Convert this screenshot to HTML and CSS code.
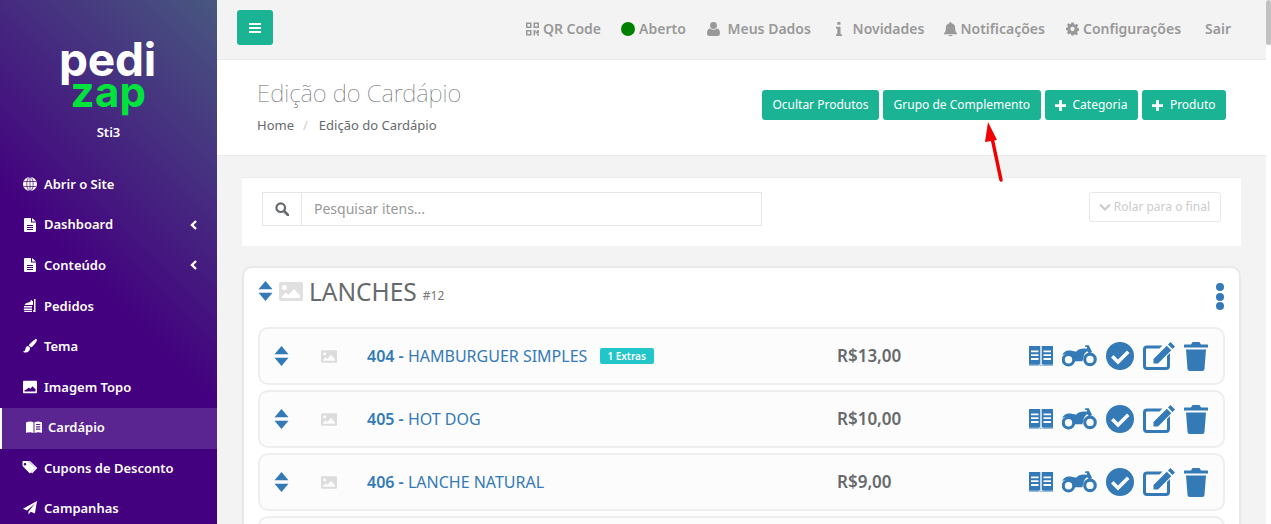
FILE: index.html
```html
<!DOCTYPE html>
<html lang="pt-BR">
<head>
<meta charset="utf-8">
<title>Edição do Cardápio</title>
<link rel="stylesheet" href="styles.css">
</head>
<body>
<svg class="sprite" width="0" height="0" aria-hidden="true">
  <symbol id="i-globe" viewBox="0 0 14 14"><circle cx="7" cy="7" r="7" fill="#fff"/><g fill="none" stroke="#43007f" stroke-width=".7"><ellipse cx="7" cy="7" rx="3.200" ry="7"/><path d="M7 0v14M.7 4.500h12.600M.7 9.500h12.600"/></g></symbol>
  <symbol id="i-file" viewBox="0 0 12 14"><path fill-rule="evenodd" d="M1 0h6v4.500h5V13a1 1 0 0 1-1 1H1a1 1 0 0 1-1-1V1a1 1 0 0 1 1-1zm7 0 4 3.500H8zM3 7v1h6V7zm0 2v1h6V9zm0 2v1h6v-1z"/></symbol>
  <symbol id="i-cloche" viewBox="0 0 14 14"><path d="M11 0h1.500v13H10.300v-2h.7zM5.500 3.500 7.500 2.500V1.500L9 1v1h1v4H1.500A4 4 0 0 1 5.500 3.500zM1 7h8v1.500H1zM.8 9.500H9V11H.8zM.8 11.800H9V13H2.300A1.500 1.500 0 0 1 .8 11.800z"/></symbol>
  <symbol id="i-brush" viewBox="0 0 14 14"><path d="M13.600.3c.5.500.4 1.200 0 1.900-1.500 2.600-3.800 5-5.600 6.300L5.700 6.200C7.200 4.300 9.500 2 12 .5c.6-.4 1.200-.6 1.600-.2zM5.200 7.100l1.900 1.900c0 2.600-2 4.600-4.500 4.600-1 0-2-.4-2.600-1.200 1.500 0 2-.7 2.300-2 .3-1.700 1.300-3.100 2.900-3.300z"/></symbol>
  <symbol id="i-picture" viewBox="0 0 14 12.500"><path fill-rule="evenodd" d="M1 0h12a1 1 0 0 1 1 1v10.500a1 1 0 0 1-1 1H1a1 1 0 0 1-1-1V1a1 1 0 0 1 1-1zM1.500 10.800h11V8.500L9.400 5.500 7.500 8 5.800 6.800 3.500 8.800 1.500 9.500z"/></symbol>
  <symbol id="i-book" viewBox="0 0 16 12"><path fill-rule="evenodd" d="M0 1.500C2.500.2 5.500.2 7.500 1.300V12C5.500 11 2.500 11 0 11.800zM8.500 1.300c2-1.100 5-1.100 7.500.2v10.300c-2.500-.8-5.500-.8-7.500.2zM10 3v1.100h4.300V3zm0 2.300v1.100h4.300V5.300zm0 2.300v1.100h4.300V7.600z"/></symbol>
  <symbol id="i-tags" viewBox="0 0 16 14"><path d="M1 0h5.200l7 7-5.300 5.500L1 5.400a1.500 1.500 0 0 1-.5-1V1A1 1 0 0 1 1 0zm2 2a1.300 1.300 0 1 0 0 2.600A1.300 1.300 0 0 0 3 2zM8 0l7.300 7.100-5.200 5.400-1-1 4.300-4.400L6.700 0z" fill-rule="evenodd"/></symbol>
  <symbol id="i-plane" viewBox="0 0 14 14"><path d="M14 0 11.900 12.500 7.800 10.800 5.500 13.500V10.500L12 2.500 4 9.500 0 7.800z"/></symbol>
  <symbol id="i-qr" viewBox="0 0 13 13"><path fill-rule="evenodd" d="M0 0h5.500v5.500H0zm1.500 1.500V4H4V1.500zM7.500 0H13v5.500H7.500zM9 1.500V4h2.500V1.500zM0 7.500h5.500V13H0zM1.500 9v2.500H4V9zM7.500 7.500h2v1.500H11V7.500h2v3.500H9.500V9.500h-.5V13H7.500zM11 11.500h2V13h-2z"/></symbol>
  <symbol id="i-user" viewBox="0 0 13 14"><path d="M6.500 0a3.400 3.400 0 1 1 0 6.900 3.400 3.400 0 0 1 0-6.900zM3.200 6.600c.9.800 2 1.200 3.300 1.200s2.400-.4 3.300-1.200C11.800 6.700 13 8.300 13 11.500c0 1.500-1 2.500-2.300 2.500H2.300C1 14 0 13 0 11.500c0-3.200 1.200-4.800 3.200-4.900z"/></symbol>
  <symbol id="i-info" viewBox="0 0 6 14"><path d="M1.300 0h3.200v2.800H1.300zM0 4.800h4.500v7.400H6V14H0v-1.800h1.300V6.600H0z"/></symbol>
  <symbol id="i-bell" viewBox="0 0 14 15"><path d="M7 0a1 1 0 0 1 1 1v.4c2.400.4 4 2.300 4 4.800 0 3.600 1 5 2 6.100v.9H0v-.9c1-1.100 2-2.500 2-6.100 0-2.500 1.600-4.400 4-4.800V1a1 1 0 0 1 1-1zM5 14h4a2 2 0 0 1-4 0z"/></symbol>
  <symbol id="i-gear" viewBox="0 0 14 14"><path fill-rule="evenodd" d="M5.700 0h2.600l.4 1.800 1.300.6L11.600 1.400l1.500 1.900-1.100 1.400.5 1.300 1.500.4v2.400l-1.600.5-.5 1.300 1 1.400-1.700 1.700-1.500-1-1.200.6L8.200 14H5.800l-.4-1.700-1.200-.5-1.500 1-1.700-1.700 1-1.500-.5-1.200L0 8.100V5.700l1.600-.4.5-1.300-1-1.500L2.800.9l1.500 1 1.100-.6zM7 4.700a2.300 2.300 0 1 0 0 4.600 2.300 2.300 0 0 0 0-4.600z"/></symbol>
  <symbol id="i-sort" viewBox="0 0 15 20"><path d="M7.500 0 14.500 8.300H.5zM.5 11.700h14L7.500 20z"/></symbol>
  <symbol id="i-openbook" viewBox="0 0 24 20"><path fill-rule="evenodd" d="M0 0h11.300v18.500H0zM12.700 0H24v18.500H12.700zM2 4.500v1.800h7.500V4.500zM2 8.300v1.800h7.500V8.300zM2 12.100v1.800h7.500v-1.800zM14.500 4.500v1.800H22V4.500zM14.500 8.300v1.800H22V8.300zM14.500 12.100v1.800H22v-1.800z"/><path d="M0 18.500h9.500L11 20h2l1.500-1.500H24V19.500H0z"/></symbol>
  <symbol id="i-moto" viewBox="0 0 36 22"><path fill-rule="evenodd" d="M6.700 7.800a7 7 0 1 1 0 14 7 7 0 0 1 0-14zm0 3.200a3.800 3.800 0 1 0 0 7.600 3.800 3.800 0 0 0 0-7.600zM28.800 7.500a7 7 0 1 1 0 14 7 7 0 0 1 0-14zm0 3.200a3.800 3.800 0 1 0 0 7.600 3.800 3.800 0 0 0 0-7.600z"/><path d="M0 10C1.500 7 4 5.300 7 5.300c3 0 5 .7 7.500 1.200C16.500 4.500 20 3 24.500 3.500L26 3 25.500 1.800 23.500 1.500 24 0h3.500l3.500 7-3 1.500-2-2.500c-1.800 1-3 2.500-3.500 4.500L21 16.500H12.500C12.700 12.500 11 9.500 8 9 5 8.500 2.500 9 0 10z"/></symbol>
  <symbol id="i-check" viewBox="0 0 28 28"><path fill-rule="evenodd" d="M14 0a14 14 0 1 1 0 28A14 14 0 0 1 14 0zM21 8.500 12 17.500 7.500 13 5 15.500l7 7 11.500-11.500z"/></symbol>
  <symbol id="i-edit" viewBox="0 0 32 28"><path d="M27.500 0 32 4.500 29.500 7 25 2.500zM23.800 3.700 28.300 8.200 15 21.500H10.500V17zM4 3.500h15.500L16.500 6.500H4a1 1 0 0 0-1 1V24a1 1 0 0 0 1 1h19a1 1 0 0 0 1-1V14l3-3V24a4 4 0 0 1-4 4H4a4 4 0 0 1-4-4V7.500a4 4 0 0 1 4-4z"/></symbol>
  <symbol id="i-trash" viewBox="0 0 24 29"><path d="M8.500 0h7l1.500 2.500h6.500a.5.500 0 0 1 .5.500v2.500H0V3a.5.500 0 0 1 .5-.5H7zM2 7.500h20L20.500 26.500a2.500 2.500 0 0 1-2.500 2.500H6a2.500 2.500 0 0 1-2.500-2.500z"/></symbol>
  <symbol id="i-image" viewBox="0 0 24 19"><path fill-rule="evenodd" d="M2 0h20a2 2 0 0 1 2 2v15a2 2 0 0 1-2 2H2a2 2 0 0 1-2-2V2a2 2 0 0 1 2-2zM5.500 3A2.500 2.500 0 1 0 5.500 8 2.500 2.500 0 0 0 5.500 3zM21 13.500 15 7 9.500 13 7 10.500 3 14.500V16h18z"/></symbol>
</svg>

<aside class="sidebar">
  <div class="brand">
    <div class="logo"><span class="logo-pedi">pedi</span><span class="logo-zap">zap</span></div>
    <div class="store">Sti3</div>
  </div>
  <nav class="menu">
    <a class="menu-item"><svg class="mi"><use href="#i-globe"/></svg><span>Abrir o Site</span></a>
    <a class="menu-item"><svg class="mi mi-file"><use href="#i-file"/></svg><span>Dashboard</span><svg class="caret" viewBox="0 0 8 10"><path d="M6 1 2 5l4 4"/></svg></a>
    <a class="menu-item"><svg class="mi mi-file"><use href="#i-file"/></svg><span>Conteúdo</span><svg class="caret" viewBox="0 0 8 10"><path d="M6 1 2 5l4 4"/></svg></a>
    <a class="menu-item"><svg class="mi"><use href="#i-cloche"/></svg><span>Pedidos</span></a>
    <a class="menu-item"><svg class="mi"><use href="#i-brush"/></svg><span>Tema</span></a>
    <a class="menu-item"><svg class="mi"><use href="#i-picture"/></svg><span>Imagem Topo</span></a>
    <a class="menu-item active"><svg class="mi"><use href="#i-book"/></svg><span>Cardápio</span></a>
    <a class="menu-item"><svg class="mi mi-wide"><use href="#i-tags"/></svg><span>Cupons de Desconto</span></a>
    <a class="menu-item"><svg class="mi"><use href="#i-plane"/></svg><span>Campanhas</span></a>
  </nav>
</aside>

<main class="main">
  <header class="topbar">
    <button class="burger" aria-label="Menu"><i></i><i></i><i></i></button>
    <div class="topnav">
      <a class="tn"><svg class="ti"><use href="#i-qr"/></svg>QR Code</a>
      <a class="tn"><span class="dot"></span>Aberto</a>
      <a class="tn tn-user"><svg class="ti"><use href="#i-user"/></svg>&nbsp;Meus Dados</a>
      <a class="tn tn-news"><svg class="ti ti-info"><use href="#i-info"/></svg>&nbsp;Novidades</a>
      <a class="tn tn-bell"><svg class="ti"><use href="#i-bell"/></svg>Notificações</a>
      <a class="tn"><svg class="ti"><use href="#i-gear"/></svg>Configurações</a>
      <a class="tn tn-exit">Sair</a>
    </div>
  </header>

  <section class="heading">
    <div>
      <h1 class="title">Edição do Cardápio</h1>
      <div class="crumbs"><span>Home</span><span class="sep">/</span><span>Edição do Cardápio</span></div>
    </div>
    <div class="actions">
      <a class="btn">Ocultar Produtos</a>
      <a class="btn">Grupo de Complemento</a>
      <a class="btn"><svg class="plus" viewBox="0 0 12 12"><path d="M4.500 0h3v4.500H12v3H7.500V12h-3V7.500H0v-3h4.500z"/></svg>Categoria</a>
      <a class="btn"><svg class="plus" viewBox="0 0 12 12"><path d="M4.500 0h3v4.500H12v3H7.500V12h-3V7.500H0v-3h4.500z"/></svg>Produto</a>
    </div>
    <svg class="arrow" viewBox="0 0 24 70"><path d="M17 60 7 13" stroke="#f00000" stroke-width="3.500" stroke-linecap="round" fill="none"/><path d="M4 2 13 20 1 22z" fill="#f00000"/></svg>
  </section>

  <div class="content">
    <section class="search-card">
      <div class="search">
        <span class="search-addon"><svg viewBox="0 0 14 14"><circle cx="5.700" cy="5.700" r="4.300" fill="none" stroke-width="2.200"/><path d="m9 9 4 4" fill="none" stroke-width="2.600" stroke-linecap="round"/></svg></span>
        <span class="search-input">Pesquisar itens...</span>
      </div>
      <a class="scroll-btn"><svg viewBox="0 0 12 8"><path d="m1 1.500 5 5 5-5"/></svg>Rolar para o final</a>
    </section>

    <section class="category">
      <div class="cat-head">
        <svg class="sort"><use href="#i-sort"/></svg>
        <svg class="cat-img"><use href="#i-image"/></svg>
        <h2 class="cat-name">LANCHES</h2>
        <small class="cat-id">#12</small>
        <span class="kebab"><i></i><i></i><i></i></span>
      </div>

      <article class="row">
        <svg class="sort"><use href="#i-sort"/></svg>
        <svg class="row-img"><use href="#i-image"/></svg>
        <div class="row-name"><b>404 -</b> HAMBURGUER SIMPLES<span class="badge">1 Extras</span></div>
        <div class="price">R$13,00</div>
        <div class="row-tools">
          <svg class="t-book"><use href="#i-openbook"/></svg><svg class="t-moto"><use href="#i-moto"/></svg><svg class="t-check"><use href="#i-check"/></svg><svg class="t-edit"><use href="#i-edit"/></svg><svg class="t-trash"><use href="#i-trash"/></svg>
        </div>
      </article>
      <article class="row">
        <svg class="sort"><use href="#i-sort"/></svg>
        <svg class="row-img"><use href="#i-image"/></svg>
        <div class="row-name"><b>405 -</b> HOT DOG</div>
        <div class="price">R$10,00</div>
        <div class="row-tools">
          <svg class="t-book"><use href="#i-openbook"/></svg><svg class="t-moto"><use href="#i-moto"/></svg><svg class="t-check"><use href="#i-check"/></svg><svg class="t-edit"><use href="#i-edit"/></svg><svg class="t-trash"><use href="#i-trash"/></svg>
        </div>
      </article>
      <article class="row">
        <svg class="sort"><use href="#i-sort"/></svg>
        <svg class="row-img"><use href="#i-image"/></svg>
        <div class="row-name"><b>406 -</b> LANCHE NATURAL</div>
        <div class="price">R$9,00</div>
        <div class="row-tools">
          <svg class="t-book"><use href="#i-openbook"/></svg><svg class="t-moto"><use href="#i-moto"/></svg><svg class="t-check"><use href="#i-check"/></svg><svg class="t-edit"><use href="#i-edit"/></svg><svg class="t-trash"><use href="#i-trash"/></svg>
        </div>
      </article>
      <article class="row"></article>
    </section>
  </div>
</main>

<div class="scrolltrack"><div class="scrollthumb"></div></div>
</body>
</html>
```

FILE: styles.css
```css
* { box-sizing: border-box; }
html, body { height: 100%; margin: 0; }
body {
  display: flex;
  overflow: hidden;
  background: #fff;
  color: #676a6c;
  font: 13px/1.4 "Noto Sans", "Open Sans", sans-serif;
}
.sprite { position: absolute; }
a { color: inherit; text-decoration: none; }

/* sidebar */
.sidebar {
  flex: 0 0 217px;
  height: 100%;
  overflow: hidden;
  color: #fff;
  background: linear-gradient(225deg, #485880 0, #43007f 290px);
}
.brand { height: 164.720px; padding-top: 39px; text-align: center; }
.logo { display: flex; flex-direction: column; align-items: center; height: 72px; font-family: Inter, sans-serif; font-weight: 700; }
.logo-pedi { font-size: 46px; line-height: 40px; letter-spacing: -.2px; margin-left: -2px; }
.logo-zap { font-size: 42px; line-height: 34px; letter-spacing: .3px; color: #00e33c; margin-top: -4px; }
.store { margin-top: 12px; font-weight: 600; line-height: 18px; }
.menu { display: flex; flex-direction: column; }
.menu-item {
  display: flex;
  align-items: center;
  flex: 0 0 40.560px;
  padding: 0 19px 2px 23px;
  font-weight: 600;
  font-size: 13px;
}
.menu-item span { flex: 1; }
.mi { width: 14px; height: 14px; margin-right: 7px; fill: #fff; flex: none; }
.mi-file { width: 12px; margin-left: 1px; margin-right: 8px; }
.mi-wide { width: 16px; margin-left: -1px; margin-right: 6px; }
.caret { width: 8px; height: 10px; fill: none; stroke: #fff; stroke-width: 2.400; flex: none; }
.active { background: #5a2590; border-left: 2px solid #fff; padding-left: 24px; }
.active .mi { width: 16px; margin-right: 6px; }

/* main */
.main { flex: 1; min-width: 0; display: flex; flex-direction: column; background: #f3f3f3; overflow: hidden; }
.topbar {
  flex: 0 0 60px;
  display: flex;
  align-items: center;
  justify-content: space-between;
  padding: 0 35px 2px 20px;
  background: #f3f3f3;
  border-bottom: 1px solid #e7eaec;
}
.burger { width: 36px; height: 35px; margin-bottom: 2px; padding: 0; display: flex; flex-direction: column; align-items: center; justify-content: center; gap: 2px; background: #1ab394; border: 0; border-radius: 3px; }
.burger i { width: 12px; height: 2px; background: #fff; }
.topnav { display: flex; gap: 20px; font-size: 14px; font-weight: 600; color: #999; }
.tn { display: flex; align-items: center; gap: 4px; }
.tn-user { margin-left: 1px; }
.tn-news { margin-left: 2px; }
.tn-bell { gap: 3px; margin-right: 1px; }
.tn-exit { margin-left: 4px; }
.ti { width: 13px; height: 14px; fill: #999; }
.ti-info { width: 6px; margin: 0 3px; }
.dot { width: 14px; height: 14px; border-radius: 50%; background: #008000; }

.heading {
  position: relative;
  flex: 0 0 96px;
  display: flex;
  justify-content: space-between;
  padding: 16px 40px 0 40px;
  background: #fff;
  border-bottom: 1px solid #e7eaec;
}
.title { margin: 0; font: 100 24px/33px "Noto Sans", sans-serif; color: #676a6c; }
.crumbs { margin-top: 7px; font-size: 13px; line-height: 18px; color: #676a6c; }
.sep { margin: 0 11px 0 9px; color: #ccc; }
.actions { display: flex; gap: 4px; margin-top: 14px; }
.btn { display: flex; align-items: center; height: 30px; padding: 0 10.500px; font-size: 12px; color: #fff; background: #1ab394; border-radius: 3px; }
.plus { width: 11px; height: 11px; margin-right: 6.500px; fill: #fff; }
.arrow { position: absolute; left: 767px; top: 60px; width: 24px; height: 70px; }

.content { flex: 1; padding: 21px 25px 0; }
.search-card {
  display: flex;
  justify-content: space-between;
  align-items: flex-start;
  height: 69px;
  padding: 14px 20px;
  margin-bottom: 20px;
  background: #fff;
  border-top: 1px solid #e7eaec;
}
.search { display: flex; width: 500px; height: 34px; border: 1px solid #e5e6e7; }
.search-addon { display: flex; align-items: center; justify-content: center; width: 39px; border-right: 1px solid #e5e6e7; }
.search-addon svg { width: 14px; height: 14px; stroke: #676a6c; }
.search-input { padding: 0 12px; font-size: 14px; line-height: 32px; color: #999; }
.scroll-btn { display: flex; align-items: center; height: 30px; padding: 0 10px 0 8.500px; font-size: 12px; color: #ccc; border: 1px solid #e7e7e7; border-radius: 3px; }
.scroll-btn svg { width: 12px; height: 8px; margin-right: 3px; fill: none; stroke: #ccc; stroke-width: 2.200; }

.category { padding: 0 14px; background: #fff; border: 2px solid #e8e8e8; border-radius: 10px; }
.cat-head { display: flex; align-items: center; height: 59px; padding-bottom: 13px; }
.sort { width: 15px; height: 20px; fill: #337ab7; flex: none; }
.cat-img { width: 24px; height: 19px; margin-left: 6px; fill: #e0e0e0; flex: none; }
.cat-name { margin: 0 0 0 6px; font-size: 24.500px; font-weight: 400; line-height: 33px; color: #676a6c; }
.cat-id { margin: 10px 0 0 6px; font-size: 12px; color: #777; }
.kebab { margin-left: auto; margin-right: 1px; display: flex; flex-direction: column; gap: 1.500px; padding-top: 11px; }
.kebab i { width: 8px; height: 8px; border-radius: 50%; background: #337ab7; }

.row {
  display: flex;
  align-items: center;
  height: 58px;
  margin-bottom: 5px;
  padding: 0 15px 0 14px;
  background: #fcfcfc;
  border: 2px solid #eee;
  border-radius: 10px;
}
.row-img { width: 16px; height: 13px; margin-left: 32px; fill: #dcdcdc; flex: none; }
.row-name { flex: 0 0 470px; margin-left: 30px; font-size: 16px; color: #337ab7; }
.row-name b { font-weight: 600; }
.badge { display: inline-block; margin-left: 13px; padding: 0 8px 0 7px; height: 16px; line-height: 16px; font-size: 10px; font-weight: 600; color: #fff; background: #23c6c8; border-radius: 2px; vertical-align: 2px; }
.price { font-size: 17px; font-weight: 600; color: #676a6c; }
.row-tools { margin-left: auto; display: flex; align-items: center; gap: 9px; }
.row-tools svg { fill: #337ab7; flex: none; }
.t-book { width: 24px; height: 20px; }
.t-moto { width: 35px; height: 22px; }
.t-check { width: 28px; height: 28px; }
.t-edit { width: 32px; height: 28px; }
.t-trash { width: 24px; height: 29px; }

.scrolltrack { flex: 0 0 5px; background: #fff; }
.scrollthumb { height: 45px; background: #c1c1c1; border-radius: 3px; }
```
